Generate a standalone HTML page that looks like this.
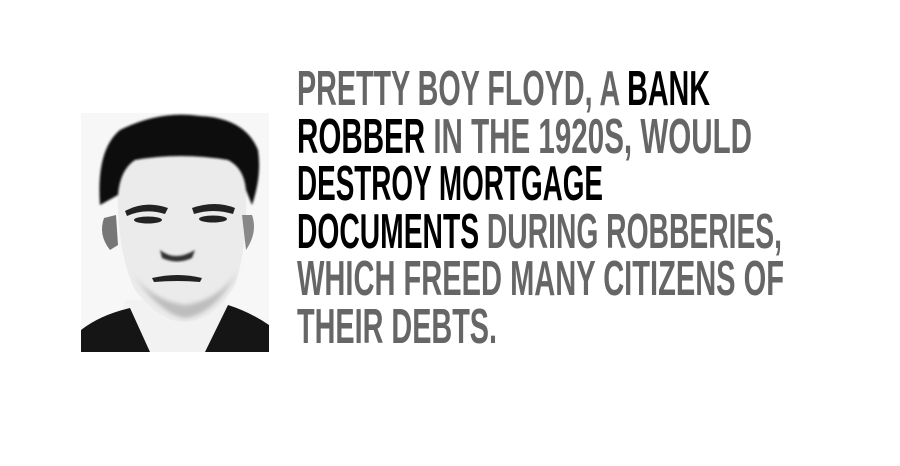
<!DOCTYPE html>
<html><head><meta charset="utf-8"><style>
html,body{margin:0;padding:0;background:#fff;width:900px;height:466px;overflow:hidden}
svg{display:block}
text{font-family:"Liberation Sans",sans-serif;font-weight:bold;font-size:49px}
</style></head><body>
<svg width="900" height="466" viewBox="0 0 900 466">
<defs>
<filter id="bl"><feGaussianBlur stdDeviation="2"/></filter>
<filter id="bl1"><feGaussianBlur stdDeviation="1"/></filter>
</defs>
<!-- photo -->
<g>
<rect x="81" y="113" width="188" height="239" fill="#f7f7f7"/>
<!-- neck/shirt -->
<path d="M125 300 L225 300 L240 352 L115 352 Z" fill="#f2f2f2"/>
<!-- suit -->
<path d="M81 352 L81 330 Q100 315 130 308 L150 352 Z" fill="#151515"/>
<path d="M269 352 L269 325 Q250 312 228 305 L205 352 Z" fill="#151515"/>
<!-- face -->
<path d="M118 170 Q115 250 135 290 Q160 322 185 322 Q215 320 235 285 Q250 240 245 170 Q230 150 180 150 Q130 152 118 170 Z" fill="#ebebeb"/>
<path d="M130 270 Q160 315 185 318 Q215 315 238 270 Q220 300 185 305 Q150 300 130 270Z" fill="#bdbdbd" filter="url(#bl)"/>
<!-- hair -->
<path d="M100 205 Q96 150 120 130 Q160 110 200 116 Q245 118 258 150 Q262 175 252 205 L246 190 Q244 168 228 160 Q180 152 135 160 Q120 170 118 195 Z" fill="#111" filter="url(#bl1)"/>
<!-- ears -->
<path d="M104 218 Q98 235 110 250 L118 245 L116 215Z" fill="#777"/>
<path d="M252 215 Q258 232 246 250 L242 215Z" fill="#888"/>
<!-- brows/eyes -->
<path d="M125 211 Q145 200 168 208 L165 214 Q145 208 127 216Z" fill="#222"/>
<path d="M192 208 Q215 200 235 208 L233 214 Q213 208 194 214Z" fill="#222"/>
<ellipse cx="148" cy="220" rx="14" ry="3.5" fill="#222"/>
<ellipse cx="213" cy="219" rx="14" ry="3.5" fill="#222"/>
<!-- nose -->
<path d="M160 250 Q175 262 195 250 L192 258 Q177 265 162 258Z" fill="#333" filter="url(#bl1)"/>
<!-- mouth -->
<path d="M152 278 Q178 272 202 278 L200 282 Q178 280 154 282Z" fill="#222"/>
</g>
<!-- text -->
<text x="297" y="105" textLength="413" lengthAdjust="spacingAndGlyphs" fill="#666">PRETTY BOY FLOYD, A <tspan fill="#000">BANK</tspan></text>
<text x="297" y="153" textLength="455" lengthAdjust="spacingAndGlyphs" fill="#666"><tspan fill="#000">ROBBER</tspan> IN THE 1920S, WOULD</text>
<text x="297" y="200" textLength="306" lengthAdjust="spacingAndGlyphs" fill="#000">DESTROY MORTGAGE</text>
<text x="297" y="248" textLength="485" lengthAdjust="spacingAndGlyphs" fill="#666"><tspan fill="#000">DOCUMENTS</tspan> DURING ROBBERIES,</text>
<text x="297" y="295" textLength="487" lengthAdjust="spacingAndGlyphs" fill="#666">WHICH FREED MANY CITIZENS OF</text>
<text x="297" y="343" textLength="200" lengthAdjust="spacingAndGlyphs" fill="#666">THEIR DEBTS.</text>
</svg>
</body></html>
